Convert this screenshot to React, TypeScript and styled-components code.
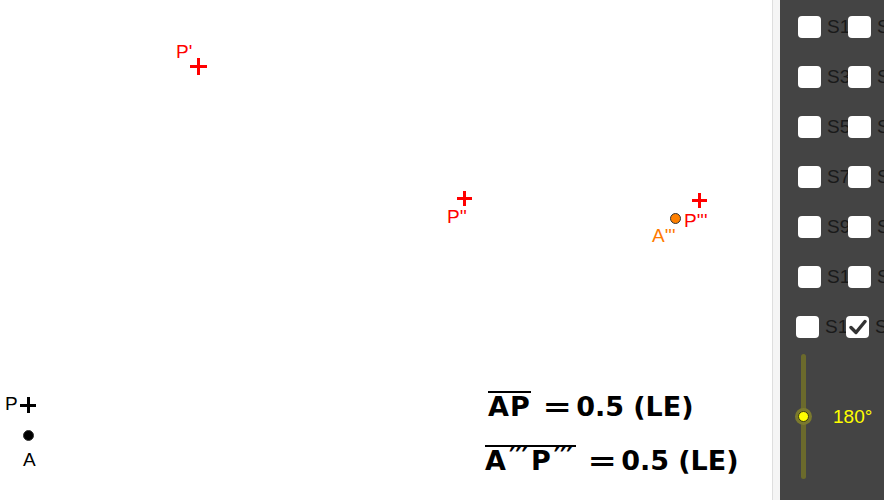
import React from "react";
import styled, { createGlobalStyle } from "styled-components";

const Global = createGlobalStyle`
  html, body { margin: 0; padding: 0; background: #ffffff; overflow: hidden; }
  body { font-family: "Liberation Sans", Arial, sans-serif; }
`;

const Page = styled.div`
  display: flex;
  width: 885px;
  height: 500px;
`;

const Canvas = styled.div`
  position: relative;
  width: 772px;
  height: 500px;
  background: #ffffff;
  overflow: hidden;
`;

const Divider = styled.div`
  width: 1px;
  background: #dedede;
`;

const Strip = styled.div`
  width: 7px;
  background: #f5f5f5;
`;

const Panel = styled.div`
  width: 104px;
  background: #444444;
  padding: 16px 0 0 18px;
  box-sizing: border-box;
  display: flex;
  flex-direction: column;
  gap: 28px;
  overflow: hidden;
`;

const Row = styled.div<{ $shift?: number }>`
  display: grid;
  grid-template-columns: 50px 50px;
  height: 22px;
  margin-left: ${(p) => p.$shift ?? 0}px;
`;

const Item = styled.label`
  display: flex;
  align-items: center;
  gap: 6px;
  white-space: nowrap;
  height: 22px;
`;

const Box = styled.span`
  position: relative;
  z-index: 1;
  flex: none;
  width: 23px;
  height: 22px;
  border-radius: 4px;
  background: #ffffff;
  display: flex;
  align-items: center;
  justify-content: center;
`;

const ItemLabel = styled.span`
  font-size: 19px;
  color: #1a1a1a;
  line-height: 22px;
`;

const SliderArea = styled.div`
  display: flex;
  align-items: center;
  height: 125px;
  margin-top: -12px;
`;

const Track = styled.div`
  position: relative;
  width: 5px;
  height: 125px;
  margin-left: 3px;
  border-radius: 3px;
  background: #6b6a2c;
`;

const Thumb = styled.div`
  position: absolute;
  left: 50%;
  top: 50%;
  width: 11px;
  height: 11px;
  margin: -5.5px 0 0 -5.5px;
  border-radius: 50%;
  background: #ffff00;
  border: 1px solid #3a3a10;
  box-sizing: border-box;
  box-shadow: 0 0 0 3px #7b7a2e;
`;

const SliderValue = styled.span`
  margin-left: 27px;
  font-size: 19px;
  color: #ffff00;
`;

const Label = styled.span<{ $x: number; $y: number; $c: string }>`
  position: absolute;
  left: ${(p) => p.$x}px;
  top: ${(p) => p.$y}px;
  font-size: 19px;
  line-height: 19px;
  color: ${(p) => p.$c};
  white-space: nowrap;
`;

const Cross = styled.span<{ $x: number; $y: number; $c: string; $s: number }>`
  position: absolute;
  left: ${(p) => p.$x - p.$s / 2}px;
  top: ${(p) => p.$y - p.$s / 2}px;
  width: ${(p) => p.$s}px;
  height: ${(p) => p.$s}px;
  &::before, &::after {
    content: "";
    position: absolute;
    background: ${(p) => p.$c};
  }
  &::before {
    left: 0;
    right: 0;
    top: 50%;
    height: 3px;
    margin-top: -1.5px;
  }
  &::after {
    top: 0;
    bottom: 0;
    left: 50%;
    width: 3px;
    margin-left: -1.5px;
  }
`;

const Dot = styled.span<{ $x: number; $y: number; $c: string }>`
  position: absolute;
  left: ${(p) => p.$x - 5.5}px;
  top: ${(p) => p.$y - 5.5}px;
  width: 11px;
  height: 11px;
  border-radius: 50%;
  background: ${(p) => p.$c};
  border: 1px solid #333;
  box-sizing: border-box;
`;

const Formula = styled.div<{ $x: number; $y: number }>`
  position: absolute;
  left: ${(p) => p.$x}px;
  top: ${(p) => p.$y}px;
  display: flex;
  align-items: baseline;
  font-family: "DejaVu Sans", sans-serif;
  font-weight: bold;
  font-size: 27px;
  line-height: 30px;
  color: #000;
  white-space: nowrap;
`;

const Over = styled.span`
  border-top: 2px solid #000;
  padding-top: 1px;
  letter-spacing: 1px;
  line-height: 26px;
`;

const Primes = styled.span`
  font-size: 24px;
  letter-spacing: 0;
  position: relative;
  top: -5px;
  margin: 0 3px 0 2px;
`;

const Eq = styled.span`
  margin: 0 8px 0 15px;
  transform: scaleX(1.3);
  display: inline-block;
`;

const Num = styled.span`
  margin-right: 9px;
`;

const Check = () => (
  <svg width="18" height="16" viewBox="0 0 18 16">
    <path d="M2 8.5 L7 13.5 L16 2.5" fill="none" stroke="#333" strokeWidth="3.4" strokeLinecap="round" strokeLinejoin="round" />
  </svg>
);

const rows: [string, string, boolean, boolean][] = [
  ["S1", "S2", false, false],
  ["S3", "S4", false, false],
  ["S5", "S6", false, false],
  ["S7", "S8", false, false],
  ["S9", "S10", false, false],
  ["S11", "S12", false, false],
  ["S13", "S14", false, true],
];

export default function App() {
  return (
    <>
      <Global />
      <Page>
        <Canvas>
          <Label $x={176} $y={41.5} $c="#ff0000">P'</Label>
          <Cross $x={198} $y={66.5} $c="#ff0000" $s={17} />

          <Cross $x={464.5} $y={198.5} $c="#ff0000" $s={15} />
          <Label $x={447} $y={206.5} $c="#ff0000">P''</Label>

          <Cross $x={699.5} $y={200} $c="#ff0000" $s={15} />
          <Label $x={684} $y={210.5} $c="#ff0000">P'''</Label>
          <Dot $x={675} $y={218} $c="#ff8000" />
          <Label $x={652} $y={225.5} $c="#ff7a00">A'''</Label>

          <Label $x={5} $y={393.5} $c="#000">P</Label>
          <Cross $x={28} $y={405} $c="#000" $s={16} />
          <Dot $x={28} $y={435} $c="#000" />
          <Label $x={23} $y={449.5} $c="#000">A</Label>

          <Formula $x={488} $y={391}>
            <Over>AP</Over>
            <Eq>=</Eq>
            <Num>0.5</Num>
            <span>(LE)</span>
          </Formula>

          <Formula $x={485} $y={445}>
            <Over>
              A<Primes>′′′</Primes>P<Primes>′′′</Primes>
            </Over>
            <Eq>=</Eq>
            <Num>0.5</Num>
            <span>(LE)</span>
          </Formula>
        </Canvas>
        <Divider />
        <Strip />
        <Panel>
          {rows.map(([a, b, ca, cb], i) => (
            <Row key={a} $shift={i === 6 ? -2 : 0}>
              <Item>
                <Box>{ca && <Check />}</Box>
                <ItemLabel>{a}</ItemLabel>
              </Item>
              <Item>
                <Box>{cb && <Check />}</Box>
                <ItemLabel>{b}</ItemLabel>
              </Item>
            </Row>
          ))}
          <SliderArea>
            <Track>
              <Thumb />
            </Track>
            <SliderValue>180°</SliderValue>
          </SliderArea>
        </Panel>
      </Page>
    </>
  );
}
